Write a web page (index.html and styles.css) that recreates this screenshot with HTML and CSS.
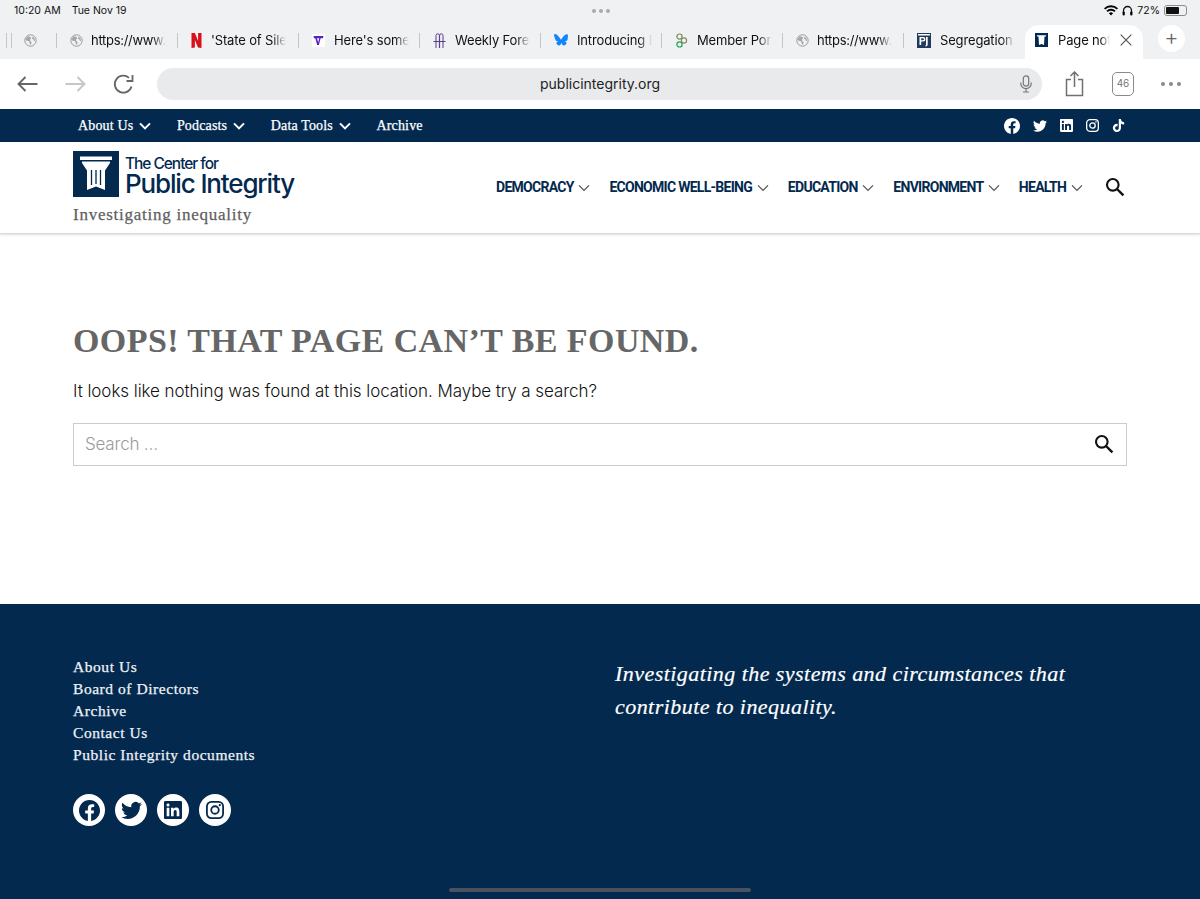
FILE: index.html
```html
<!DOCTYPE html>
<html lang="en">
<head>
  <meta charset="UTF-8">
  <meta name="viewport" content="width=device-width, initial-scale=1.0">
  <title>Page not found</title>
  <link rel="stylesheet" href="styles.css">
</head>
<body>

  <svg class="defs" width="0" height="0">
    <symbol id="i-fb" viewBox="0 0 24 24"><path d="M24 12.073c0-6.627-5.373-12-12-12s-12 5.373-12 12c0 5.99 4.388 10.954 10.125 11.854v-8.385H7.078v-3.47h3.047V9.43c0-3.007 1.792-4.669 4.533-4.669 1.312 0 2.686.235 2.686.235v2.953H15.83c-1.491 0-1.956.925-1.956 1.874v2.25h3.328l-.532 3.47h-2.796v8.385C19.612 23.027 24 18.062 24 12.073z"/></symbol>
    <symbol id="i-tw" viewBox="0 0 24 24"><path d="M23.953 4.57a10 10 0 01-2.825.775 4.958 4.958 0 002.163-2.723c-.951.555-2.005.959-3.127 1.184a4.92 4.92 0 00-8.384 4.482C7.69 8.095 4.067 6.13 1.64 3.162a4.822 4.822 0 00-.666 2.475c0 1.71.87 3.213 2.188 4.096a4.904 4.904 0 01-2.228-.616v.06a4.923 4.923 0 003.946 4.827 4.996 4.996 0 01-2.212.085 4.936 4.936 0 004.604 3.417 9.867 9.867 0 01-6.102 2.105c-.39 0-.779-.023-1.17-.067a13.995 13.995 0 007.557 2.209c9.053 0 13.998-7.496 13.998-13.985 0-.21 0-.42-.015-.63A9.935 9.935 0 0024 4.59z"/></symbol>
    <symbol id="i-li" viewBox="0 0 24 24"><path d="M20.447 20.452h-3.554v-5.569c0-1.328-.027-3.037-1.852-3.037-1.853 0-2.136 1.445-2.136 2.939v5.667H9.351V9h3.414v1.561h.046c.477-.9 1.637-1.85 3.37-1.85 3.601 0 4.267 2.37 4.267 5.455v6.286zM5.337 7.433c-1.144 0-2.063-.926-2.063-2.065 0-1.138.92-2.063 2.063-2.063 1.14 0 2.064.925 2.064 2.063 0 1.139-.925 2.065-2.064 2.065zm1.782 13.019H3.555V9h3.564v11.452zM22.225 0H1.771C.792 0 0 .774 0 1.729v20.542C0 23.227.792 24 1.771 24h20.451C23.2 24 24 23.227 24 22.271V1.729C24 .774 23.2 0 22.222 0h.003z"/></symbol>
    <symbol id="i-ig" viewBox="0 0 24 24"><rect x="1.2" y="1.2" width="21.6" height="21.6" rx="6" fill="none" stroke="currentColor" stroke-width="2.4"/><circle cx="12" cy="12" r="5" fill="none" stroke="currentColor" stroke-width="2.4"/><circle cx="18.4" cy="5.6" r="1.5"/></symbol>
    <symbol id="i-tt" viewBox="0 0 24 24"><path d="M12.525.02c1.31-.02 2.61-.01 3.91-.02.08 1.53.63 3.09 1.75 4.17 1.12 1.11 2.7 1.62 4.24 1.79v4.03c-1.44-.05-2.89-.35-4.2-.97-.57-.26-1.1-.59-1.62-.93-.01 2.92.01 5.84-.02 8.75-.08 1.4-.54 2.79-1.35 3.94-1.31 1.92-3.58 3.17-5.91 3.21-1.43.08-2.86-.31-4.08-1.03-2.02-1.19-3.44-3.37-3.65-5.71-.02-.5-.03-1-.01-1.49.18-1.9 1.12-3.72 2.58-4.96 1.66-1.44 3.98-2.13 6.15-1.72.02 1.48-.04 2.96-.04 4.44-.99-.32-2.15-.23-3.02.37-.63.41-1.11 1.04-1.36 1.75-.21.51-.15 1.07-.14 1.61.24 1.64 1.82 3.02 3.5 2.87 1.12-.01 2.19-.66 2.77-1.61.19-.33.4-.67.41-1.06.1-1.79.06-3.57.07-5.36.01-4.03-.01-8.05.02-12.07z"/></symbol>
    <symbol id="i-globe" viewBox="0 0 16 16"><circle cx="8" cy="8" r="7" fill="none" stroke="#8f9194" stroke-width="1.1"/><path fill="#a4a6a9" d="M4.500 2.800l3 .5 1.500 2-1.700 1.500.6 2.200 1.400 1.200-.6 2.800-1.400-.4-1-3.600L2.600 8l-.8-1.400zM10.500 3.200l2.300 2 .9 3-1.300.3-1-1.900-1.500-.8z"/></symbol>
    <symbol id="i-chev" viewBox="0 0 12 8"><path d="M1 1.400l5 5 5-5" fill="none" stroke="currentColor" stroke-width="2"/></symbol>
    <symbol id="i-thin" viewBox="0 0 12 8"><path d="M1 1.400l5 5 5-5" fill="none" stroke="currentColor" stroke-width="1.300"/></symbol>
    <symbol id="i-search" viewBox="0 0 20 20"><circle cx="7.800" cy="7.800" r="5.800" fill="none" stroke="currentColor" stroke-width="2.100"/><path d="M12 12l6.400 6.400" stroke="currentColor" stroke-width="2.400"/></symbol>
  </svg>

  <div class="status-bar">
    <div class="status-time"><span>10:20 AM</span><span>Tue Nov 19</span></div>
    <div class="status-dots"><i></i><i></i><i></i></div>
    <div class="status-right">
      <svg width="14" height="11" viewBox="0 0 14 11"><path d="M7 10.600L4.900 8.300a3 3 0 014.200 0zM3.700 7.100L2.400 5.700a6.600 6.600 0 019.200 0l-1.300 1.400a4.700 4.700 0 00-6.600 0zM1.200 4.500L0 3.200a10 10 0 0114 0l-1.200 1.300a8.300 8.300 0 00-11.600 0z"/></svg>
      <svg width="11" height="11" viewBox="0 0 11 11"><path d="M1.500 9V5.500a4 4 0 018 0V9" fill="none" stroke="#111" stroke-width="1.300"/><rect x=".6" y="6.400" width="2.200" height="4" rx="1"/><rect x="8.200" y="6.400" width="2.200" height="4" rx="1"/></svg>
      <span>72%</span>
      <div class="battery"><b></b></div>
    </div>
  </div>

  <div class="tab-bar">
    <div class="tab-stub"><span class="stub-line"></span><svg width="13" height="13"><use href="#i-globe"/></svg></div>
    <div class="tab tab-plain"><svg class="fav" width="13" height="13"><use href="#i-globe"/></svg><span class="tab-title">https://www.</span></div>
    <div class="tab">
      <svg class="fav" width="11" height="15" viewBox="0 0 11 15"><path fill="#d8101c" d="M.5 0h3.400l3.200 8V0h3.400v15L7 14.600 3.900 7v7.600l-3.400.4z"/></svg>
      <span class="tab-title">'State of Silence</span>
    </div>
    <div class="tab">
      <svg class="fav" width="13" height="13" viewBox="0 0 13 13"><rect width="13" height="13" fill="#fff"/><path fill="#5a1fc7" d="M1.500 2h10l-.6 2.200H8.600L6.900 11H5.200L3.300 4.200H2zM5 4.200l1.200 4.400 1-4.400z"/></svg>
      <span class="tab-title">Here's some of</span>
    </div>
    <div class="tab">
      <svg class="fav" width="13" height="16" viewBox="0 0 13 16"><path d="M.5 9.500h12M3 16V3.500a1.700 1.700 0 013.400 0V16M6.600 16V3.500a1.700 1.700 0 013.400 0V16" fill="none" stroke="#5d3b8f" stroke-width="1"/></svg>
      <span class="tab-title">Weekly Forecast</span>
    </div>
    <div class="tab">
      <svg class="fav" width="14" height="13" viewBox="0 0 15 14"><path fill="#1185fe" d="M3.300 1c1.700 1.300 3.500 3.900 4.200 5.300C8.200 4.900 10 2.300 11.700 1 13 .1 15-.6 15 1.600c0 .4-.3 3.700-.4 4.200-.5 1.700-2.300 2.200-3.900 1.900 2.800.5 3.500 2 2 3.600-3 3-4.300-.8-4.600-1.700-.1-.2-.1-.2-.2 0-.3.900-1.600 4.700-4.600 1.700-1.500-1.600-.8-3.100 2-3.600C3.700 8 1.900 7.500 1.400 5.800 1.300 5.300 0 2 0 1.600 0-.6 2-.1 3.300 1z"/></svg>
      <span class="tab-title">Introducing Bluesky</span>
    </div>
    <div class="tab">
      <svg class="fav" width="13" height="15" viewBox="0 0 13 15"><g fill="none" stroke-width="1.200"><circle cx="4.500" cy="3.600" r="2.600" stroke="#7a8a55"/><circle cx="9" cy="7.500" r="2.600" stroke="#8a8a6a"/><circle cx="4.500" cy="11.400" r="2.600" stroke="#21a552"/></g></svg>
      <span class="tab-title">Member Portal</span>
    </div>
    <div class="tab tab-plain"><svg class="fav" width="13" height="13"><use href="#i-globe"/></svg><span class="tab-title">https://www.</span></div>
    <div class="tab">
      <svg class="fav" width="14" height="15" viewBox="0 0 14 15"><rect width="14" height="15" fill="#1f3a5c"/><rect x="1" y="1" width="12" height="1.500" fill="#fff"/><path fill="#fff" d="M2.500 4h3.700a2 2 0 010 4.500H4.200V12H2.500zM4.200 5.200v2h1.700a1 1 0 000-2zM9 4h1.700v7.500q0 2-2.200 2v-1.200q.5 0 .5-.9z"/></svg>
      <span class="tab-title">Segregation in the</span>
    </div>
    <div class="tab tab-active">
      <svg class="fav" width="13" height="14" viewBox="0 0 13 14"><rect width="13" height="14" fill="#03294f"/><path fill="#fff" d="M2 2.200h9v1.300h-1.500l-.5 8.500-2.500-1-2.500 1-.5-8.500H2z"/></svg>
      <span class="tab-title">Page not found</span>
      <svg class="tab-close" width="12" height="12" viewBox="0 0 12 12"><path d="M.7.7l10.600 10.600M11.300.7L.7 11.300" stroke="#555" stroke-width="1.200"/></svg>
    </div>
    <div class="tab-add">+</div>
  </div>

  <div class="toolbar">
    <svg class="tool-back" width="21" height="16" viewBox="0 0 21 16"><path d="M8.500 1L1.500 8l7 7M1.500 8H20.500" fill="none" stroke="#666" stroke-width="1.900"/></svg>
    <svg class="tool-fwd" width="21" height="16" viewBox="0 0 21 16"><path d="M12.500 1l7 7-7 7M19.500 8H.5" fill="none" stroke="#c4c6c8" stroke-width="1.900"/></svg>
    <svg class="tool-reload" width="21" height="21" viewBox="0 0 21 21"><path d="M18.500 12.500A8.500 8.500 0 1116 3.800M19.500 1v6h-6" fill="none" stroke="#666" stroke-width="1.800"/></svg>
    <div class="url-pill">
      <span class="url-text">publicintegrity.org</span>
      <svg class="url-mic" width="12" height="18" viewBox="0 0 12 18"><rect x="3.300" y=".8" width="5.400" height="10.400" rx="2.700" fill="none" stroke="#777" stroke-width="1.200"/><path d="M.8 7.500v1a5.200 5.200 0 0010.400 0v-1M6 13.700V17M3 17h6" fill="none" stroke="#777" stroke-width="1.200"/></svg>
    </div>
    <svg class="tool-share" width="19" height="26" viewBox="0 0 19 26"><path d="M6 8.500H1.500v16h16v-16H13M9.500 16V1M5.500 5l4-4 4 4" fill="none" stroke="#707070" stroke-width="1.500"/></svg>
    <div class="tool-count">46</div>
    <div class="tool-more"><i></i><i></i><i></i></div>
  </div>

  <div class="top-nav">
    <ul class="top-links">
      <li>About Us <svg width="12" height="8"><use href="#i-chev"/></svg></li>
      <li>Podcasts <svg width="12" height="8"><use href="#i-chev"/></svg></li>
      <li>Data Tools <svg width="12" height="8"><use href="#i-chev"/></svg></li>
      <li>Archive</li>
    </ul>
    <div class="top-social">
      <svg width="16" height="16"><use href="#i-fb"/></svg>
      <svg width="14" height="14"><use href="#i-tw"/></svg>
      <svg width="13" height="13"><use href="#i-li"/></svg>
      <svg width="13" height="13"><use href="#i-ig"/></svg>
      <svg width="13" height="15"><use href="#i-tt"/></svg>
    </div>
  </div>

  <header class="site-header">
    <div class="brand">
      <div class="logo">
        <svg class="logo-mark" width="46" height="46" viewBox="0 0 46 46">
          <rect width="46" height="46" fill="#03294f"/>
          <path fill="#fff" d="M7 5.500h32V9H7zM9 10.500h28v1.500l-5 7.500V39l-9-3.500L14 39V19.500L9 12z"/>
          <path stroke="#03294f" stroke-width="1.300" d="M18.500 19v15M23 19v14M27.500 19v15"/>
        </svg>
        <div class="logo-text">
          <span class="logo-small">The Center for</span>
          <span class="logo-big">Public Integrity</span>
        </div>
      </div>
      <div class="tagline">Investigating inequality</div>
    </div>
    <nav class="main-nav">
      <a>DEMOCRACY <svg width="12" height="8"><use href="#i-thin"/></svg></a>
      <a>ECONOMIC WELL-BEING <svg width="12" height="8"><use href="#i-thin"/></svg></a>
      <a>EDUCATION <svg width="12" height="8"><use href="#i-thin"/></svg></a>
      <a>ENVIRONMENT <svg width="12" height="8"><use href="#i-thin"/></svg></a>
      <a>HEALTH <svg width="12" height="8"><use href="#i-thin"/></svg></a>
      <svg class="nav-search" width="20" height="20"><use href="#i-search"/></svg>
    </nav>
  </header>

  <main class="content">
    <h1>OOPS! THAT PAGE CAN’T BE FOUND.</h1>
    <p>It looks like nothing was found at this location. Maybe try a search?</p>
    <div class="search-box">
      <span>Search …</span>
      <svg width="20" height="20"><use href="#i-search"/></svg>
    </div>
  </main>

  <footer class="site-footer">
    <div class="foot-left">
      <ul class="foot-links">
        <li>About Us</li>
        <li>Board of Directors</li>
        <li>Archive</li>
        <li>Contact Us</li>
        <li>Public Integrity documents</li>
      </ul>
      <div class="foot-social">
        <span><svg width="21" height="21"><use href="#i-fb"/></svg></span>
        <span><svg width="21" height="21"><use href="#i-tw"/></svg></span>
        <span><svg width="18" height="18"><use href="#i-li"/></svg></span>
        <span><svg width="18" height="18"><use href="#i-ig"/></svg></span>
      </div>
    </div>
    <p class="foot-quote">Investigating the systems and circumstances that contribute to inequality.</p>
  </footer>

  <div class="home-bar"></div>

</body>
</html>
```

FILE: styles.css
```css
* { box-sizing: border-box; }

html, body { margin: 0; padding: 0; }

body {
  position: relative;
  width: 1200px;
  height: 899px;
  overflow: hidden;
  background: #fff;
  font-family: Inter, "Liberation Sans", sans-serif;
  color: #111;
}

ul { list-style: none; margin: 0; padding: 0; }

.defs { position: absolute; }

/* ipad status bar */
.status-bar {
  height: 25px;
  background: #eff1f3;
  display: flex;
  align-items: center;
  justify-content: space-between;
  padding: 0 13px 4px 14px;
  font-size: 10.5px;
}
.status-time { display: flex; gap: 11px; width: 200px; }
.status-dots { display: flex; gap: 3px; }
.status-dots i { width: 4px; height: 4px; border-radius: 50%; background: #a9abae; }
.status-right { display: flex; align-items: center; justify-content: flex-end; gap: 4px; width: 200px; }
.battery {
  width: 23px;
  height: 11px;
  border: 1px solid #8c8c8c;
  border-radius: 3px;
  padding: 1px;
}
.battery b { display: block; width: 70%; height: 100%; background: #111; border-radius: 1px; }

/* safari tabs */
.tab-bar {
  height: 34px;
  background: #eff1f3;
  display: flex;
  align-items: stretch;
}
.tab-stub {
  width: 56px;
  display: flex;
  align-items: center;
  padding: 0 0 4px 6px;
  gap: 12px;
}
.stub-line { width: 6px; height: 15px; border-left: 1px solid #c5c7c9; border-right: 1px solid #c5c7c9; }
.tab {
  width: 121px;
  display: flex;
  align-items: center;
  gap: 9px;
  padding: 0 0 4px 14px;
  position: relative;
  font-size: 13px;
  letter-spacing: -.15px;
}
.tab::before {
  content: "";
  position: absolute;
  left: 0;
  top: 8px;
  height: 15px;
  width: 1px;
  background: #c3c5c7;
}
.tab .fav { flex: none; }
.tab-title {
  width: 75px;
  white-space: nowrap;
  overflow: hidden;
  -webkit-mask-image: linear-gradient(to right, #000 82%, transparent 100%);
  mask-image: linear-gradient(to right, #000 82%, transparent 100%);
}
.tab-plain { gap: 8px; letter-spacing: -.3px; }
.tab-active {
  width: 118px;
  margin-left: 1px;
  background: #fff;
  border-radius: 14px 14px 0 0;
  padding-left: 10px;
  gap: 10px;
}
.tab-active::before { display: none; }
.tab-active .tab-title { width: 52px; flex: none; }
.tab-close { flex: none; margin-left: 0; }
.tab-add {
  width: 27px;
  height: 27px;
  margin-left: 15px;
  border-radius: 50%;
  background: #fff;
  color: #666;
  font-size: 22px;
  line-height: 25px;
  text-align: center;
  font-weight: 300;
}

/* toolbar */
.toolbar {
  height: 50px;
  background: #fff;
  display: flex;
  align-items: center;
  padding-left: 17px;
}
.tool-back { margin-right: 27px; }
.tool-fwd { margin-right: 27px; }
.tool-reload { margin-right: 23px; }
.url-pill {
  width: 885px;
  height: 32px;
  border-radius: 16px;
  background: #e8eaec;
  display: flex;
  align-items: center;
  justify-content: space-between;
  padding: 0 10px 1px 383px;
  font-size: 14px;
}
.url-text { color: #222; }
.url-mic { margin-top: 1px; }
.tool-share { margin-left: 23px; margin-top: -1px; }
.tool-count {
  width: 22px;
  height: 24px;
  margin-left: 28px;
  border: 1.5px solid #8a8a8a;
  border-radius: 5px;
  font-size: 10px;
  color: #777;
  line-height: 21px;
  text-align: center;
}
.tool-more { display: flex; gap: 4px; margin-left: 27px; }
.tool-more i { width: 4px; height: 4px; border-radius: 50%; background: #8a8a8a; }

/* site top strip */
.top-nav {
  height: 33px;
  background: #03294f;
  display: flex;
  align-items: center;
  justify-content: space-between;
  padding: 0 75px 0 78px;
  color: #fff;
}
.top-links {
  display: flex;
  gap: 26px;
  font-family: "Liberation Serif", serif;
  font-size: 14px;
  letter-spacing: .15px;
  -webkit-text-stroke: .25px #fff;
}
.top-links svg { color: #fff; margin-left: 2px; }
.top-social { display: flex; align-items: center; gap: 13px; color: #fff; }
.top-social svg { fill: currentColor; display: block; }

/* site header */
.site-header {
  height: 92px;
  border-bottom: 1px solid #d9d9d9;
  box-shadow: 0 1px 2px rgba(0,0,0,.12);
  display: flex;
  justify-content: space-between;
  padding: 9px 75px 0 73px;
  position: relative;
}
.logo { display: flex; align-items: center; gap: 6px; height: 46px; }
.logo-text { display: flex; flex-direction: column; color: #03294f; padding-top: 2px; }
.logo-small { font-size: 15.5px; line-height: 17px; font-weight: 500; letter-spacing: -1.05px; }
.logo-big { font-size: 26px; line-height: 24px; font-weight: 500; letter-spacing: -1.15px; }
.tagline {
  margin-top: 8px;
  font-family: "Liberation Serif", serif;
  font-size: 17px;
  letter-spacing: .75px;
  color: #5f5f5f;
  -webkit-text-stroke: .25px #5f5f5f;
}
.main-nav {
  display: flex;
  align-items: center;
  height: 72px;
  gap: 19px;
  font-family: Roboto, "Liberation Sans", sans-serif;
  font-size: 14px;
  font-weight: 700;
  letter-spacing: -.72px;
  color: #03294f;
}
.main-nav a { white-space: nowrap; }
.main-nav a svg { color: #555; margin-left: 2px; }
.nav-search { color: #111; margin-left: 3px; }

/* 404 content */
.content {
  height: 370px;
  padding: 86px 73px 0;
}
.content h1 {
  margin: 0;
  font-family: "Liberation Serif", serif;
  font-size: 34px;
  line-height: 42px;
  font-weight: 700;
  letter-spacing: .42px;
  color: #666;
}
.content p {
  margin: 16px 0 0;
  font-size: 17px;
  line-height: 26px;
  font-weight: 300;
  letter-spacing: -.06px;
  color: #111;
}
.search-box {
  margin-top: 19px;
  height: 43px;
  border: 1px solid #ccc;
  display: flex;
  align-items: center;
  justify-content: space-between;
  padding: 0 12px 1px 11px;
  font-size: 17px;
  font-weight: 300;
  letter-spacing: -.2px;
  color: #9a9a9a;
}
.search-box svg { color: #111; }

/* footer */
.site-footer {
  height: 295px;
  background: #03294f;
  color: #fff;
  display: flex;
  padding: 53px 0 0 73px;
  font-family: "Liberation Serif", serif;
}
.foot-left { width: 542px; }
.foot-links {
  font-size: 15.5px;
  line-height: 22px;
  letter-spacing: .55px;
  color: #eef2f6;
  -webkit-text-stroke: .25px #eef2f6;
}
.foot-links li { position: relative; top: -1px; }
.foot-social { display: flex; gap: 10px; margin-top: 27px; }
.foot-social span {
  width: 32px;
  height: 32px;
  border-radius: 50%;
  background: #fff;
  color: #03294f;
  display: flex;
  align-items: center;
  justify-content: center;
}
.foot-social svg { fill: currentColor; }
.foot-quote {
  margin: 0;
  width: 470px;
  font-size: 22px;
  line-height: 33px;
  font-style: italic;
  letter-spacing: .45px;
  -webkit-text-stroke: .2px #fff;
}

.home-bar {
  position: absolute;
  left: 449px;
  bottom: 7px;
  width: 302px;
  height: 4px;
  border-radius: 2px;
  background: #4a5260;
}
```
